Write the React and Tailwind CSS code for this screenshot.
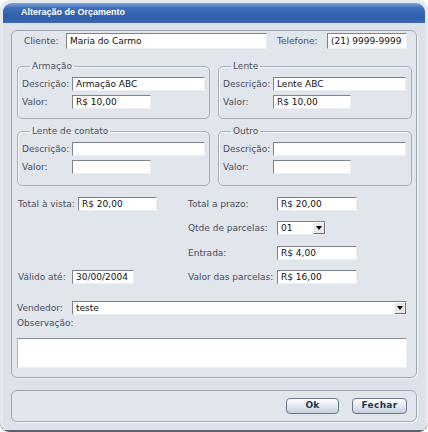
import React from "react";

const field =
  "bg-white border border-t-[#7d828c] border-l-[#7d828c] border-r-[#eceef2] border-b-[#eceef2] flex items-center pl-[3px] text-[9px] leading-[12px] text-[#111] whitespace-nowrap overflow-hidden shrink-0";
const label = "text-[9px] leading-[12px] text-[#4a4e5c] whitespace-nowrap shrink-0";

function Field({ cls, value }) {
  return <div className={field + " " + cls}>{value}</div>;
}

function Arrow() {
  return (
    <div className="w-[12px] h-[12px] bg-[#e8e8e8] border border-t-white border-l-white border-r-[#707070] border-b-[#707070] flex items-center justify-center shrink-0">
      <svg width="6" height="4" viewBox="0 0 6 4">
        <path d="M0 0h6L3 4z" fill="#000" />
      </svg>
    </div>
  );
}

function Select({ cls, value }) {
  return (
    <div className={field + " justify-between " + cls}>
      <span>{value}</span>
      <Arrow />
    </div>
  );
}

function Group({ title, cls, descW, valW, pb, descVal, valVal }) {
  return (
    <fieldset
      className={
        "border border-[#a9afbb] rounded-[5px] px-[4px] pt-[5px] min-w-0 shrink-0 shadow-[inset_1px_1px_0_#f2f4f7] " +
        cls +
        " " +
        pb
      }
    >
      <legend className="ml-[8px] px-[2px] text-[9px] leading-[12px] text-[#4a4e5c]">
        {title}
      </legend>
      <div className="flex items-center h-[14px]">
        <span className={label + " w-[50px]"}>Descrição:</span>
        <Field cls={descW + " h-[14px]"} value={descVal} />
      </div>
      <div className="flex items-center h-[14px] mt-[4px]">
        <span className={label + " w-[50px]"}>Valor:</span>
        <Field cls={valW + " h-[14px]"} value={valVal} />
      </div>
    </fieldset>
  );
}

function Button({ cls, children }) {
  return (
    <div
      className={
        "h-[16px] rounded-[4px] border border-[#6c7890] bg-[linear-gradient(to_bottom,#ffffff,#dfe6ef_55%,#c3cedd)] flex items-center justify-center text-[9px] font-bold text-[#26324a] tracking-[0.3px] " +
        cls
      }
    >
      {children}
    </div>
  );
}

export default function App() {
  return (
    <div className="w-[428px] h-[432px] bg-white font-['DejaVu_Sans',sans-serif]">
      <div className="w-[428px] h-[432px] rounded-[9px] bg-[#e6e9ee] border-b-2 border-b-[#5d626c] flex flex-col px-[3px] pt-[3px]">
        {/* title bar */}
        <div className="h-[20px] shrink-0 rounded-t-[9px] bg-[linear-gradient(to_bottom,#7ea3da,#3f6fbb_25%,#2f5ea9_70%,#3b69b3)] flex items-center pl-[18px]">
          <span className="font-['Liberation_Sans',sans-serif] text-[9px] font-bold text-white">
            Alteração de Orçamento
          </span>
        </div>
        {/* body */}
        <div className="flex-1 bg-[#dde1e9] px-[8px] pt-[7px] flex flex-col">
          {/* main panel */}
          <div className="h-[348px] shrink-0 rounded-[6px] border border-[#a1a7b3] bg-[#e1e5ec] shadow-[1px_1px_0_#f3f5f8] flex flex-col">
            {/* cliente row */}
            <div className="flex items-center h-[16px] mt-[2px] pl-[12px]">
              <span className={label + " w-[42px]"}>Cliente:</span>
              <Field cls="w-[201px] h-[16px]" value="Maria do Carmo" />
              <span className={label + " w-[50px] ml-[10px]"}>Telefone:</span>
              <Field cls="w-[80px] h-[16px]" value="(21) 9999-9999" />
            </div>
            {/* groups row 1 */}
            <div className="flex pl-[5px] gap-[8px] mt-[11px]">
              <Group
                title="Armação"
                cls="w-[193px]"
                descW="w-[133px]"
                valW="w-[79px]"
                pb="pb-[9px]"
                descVal="Armação ABC"
                valVal="R$ 10,00"
              />
              <Group
                title="Lente"
                cls="w-[194px]"
                descW="w-[133px]"
                valW="w-[78px]"
                pb="pb-[9px]"
                descVal="Lente ABC"
                valVal="R$ 10,00"
              />
            </div>
            {/* groups row 2 */}
            <div className="flex pl-[5px] gap-[8px] mt-[6px]">
              <Group
                title="Lente de contato"
                cls="w-[193px]"
                descW="w-[133px]"
                valW="w-[79px]"
                pb="pb-[11px]"
                descVal=""
                valVal=""
              />
              <Group
                title="Outro"
                cls="w-[194px]"
                descW="w-[133px]"
                valW="w-[78px]"
                pb="pb-[11px]"
                descVal=""
                valVal=""
              />
            </div>
            {/* totals */}
            <div className="flex items-center h-[14px] mt-[11px]">
              <div className="w-[176px] pl-[6px] flex items-center">
                <span className={label + " w-[60px]"}>Total à vista:</span>
                <Field cls="w-[79px] h-[14px]" value="R$ 20,00" />
              </div>
              <span className={label + " w-[89px]"}>Total a prazo:</span>
              <Field cls="w-[80px] h-[14px]" value="R$ 20,00" />
            </div>
            <div className="flex items-center h-[14px] mt-[10px]">
              <div className="w-[176px]" />
              <span className={label + " w-[89px]"}>Qtde de parcelas:</span>
              <Select cls="w-[49px] h-[14px]" value="01" />
            </div>
            <div className="flex items-center h-[14px] mt-[11px]">
              <div className="w-[176px]" />
              <span className={label + " w-[89px]"}>Entrada:</span>
              <Field cls="w-[80px] h-[14px]" value="R$ 4,00" />
            </div>
            <div className="flex items-center h-[14px] mt-[10px]">
              <div className="w-[176px] pl-[6px] flex items-center">
                <span className={label + " w-[54px]"}>Válido até:</span>
                <Field cls="w-[62px] h-[14px]" value="30/00/2004" />
              </div>
              <span className={label + " w-[89px]"}>Valor das parcelas:</span>
              <Field cls="w-[80px] h-[14px]" value="R$ 16,00" />
            </div>
            {/* vendedor */}
            <div className="flex items-center h-[14px] mt-[17px] pl-[5px]">
              <span className={label + " w-[55px]"}>Vendedor:</span>
              <Select cls="w-[335px] h-[14px]" value="teste" />
            </div>
            <div className="flex pl-[5px] mt-[2px] h-[12px]">
              <span className={label}>Observação:</span>
            </div>
            <div className="flex pl-[5px] mt-[9px]">
              <div className="w-[390px] h-[30px] bg-white border border-t-[#8a8f98] border-l-[#b0b5be] border-r-[#eceef2] border-b-[#eceef2]" />
            </div>
          </div>
          {/* footer panel */}
          <div className="h-[32px] shrink-0 mt-[12px] rounded-[6px] border border-[#a1a7b3] bg-[#e1e5ec] shadow-[1px_1px_0_#f3f5f8] flex items-center justify-end pr-[9px] gap-[13px]">
            <Button cls="w-[53px]">Ok</Button>
            <Button cls="w-[55px]">Fechar</Button>
          </div>
        </div>
      </div>
    </div>
  );
}
